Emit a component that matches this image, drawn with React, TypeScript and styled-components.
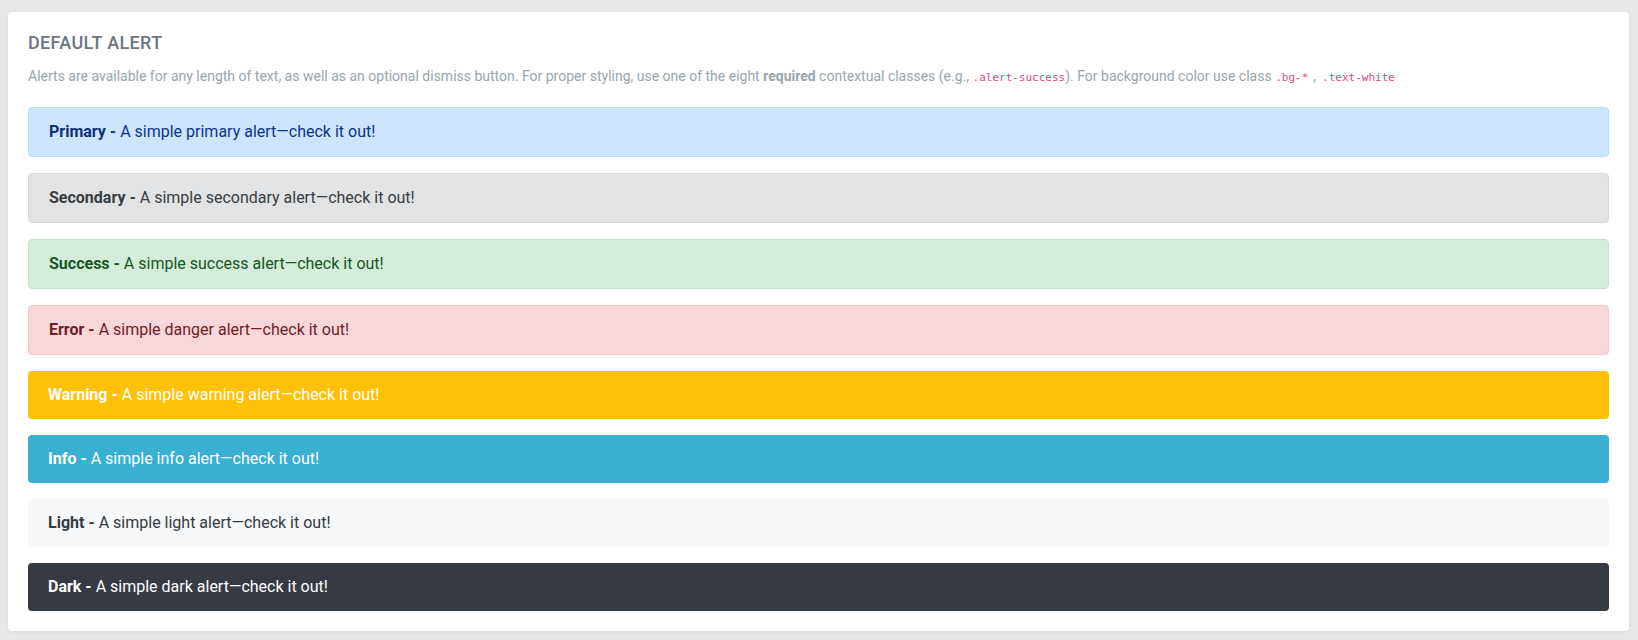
import React from "react";
import styled, { createGlobalStyle } from "styled-components";

const GlobalStyle = createGlobalStyle`
  html, body {
    margin: 0;
    padding: 0;
    background: #e8e8e8;
  }
  body {
    font-family: Roboto, "Noto Sans", sans-serif;
    -webkit-font-smoothing: antialiased;
  }
  * { box-sizing: border-box; }
`;

const Page = styled.div`
  padding: 12px 9px 9px 8px;
`;

const Card = styled.section`
  background: #ffffff;
  border-radius: 4px;
  box-shadow: 0 1px 4px rgba(0, 0, 0, 0.06);
  padding: 20px;
`;

const Title = styled.h4`
  margin: 0 0 12px;
  font-size: 18px;
  line-height: 21.6px;
  font-weight: 500;
  color: #6c757d;
  text-transform: uppercase;
  letter-spacing: 0.35px;
`;

const Description = styled.p`
  margin: 0 0 19px;
  font-size: 14px;
  line-height: 21px;
  color: #98a6ad;

  strong {
    font-weight: 700;
  }
`;

const Code = styled.code`
  font-family: "DejaVu Sans Mono", "Liberation Mono", monospace;
  font-size: 11px;
  color: #e83e8c;
`;

const Separator = styled.span`
  display: inline-block;
  margin: 0 6px 0 5px;
`;

type Variant = {
  bg: string;
  border: string;
  color: string;
  strong: string;
};

const Alert = styled.div<{ $v: Variant }>`
  background: ${(p) => p.$v.bg};
  border: ${(p) => (p.$v.border === "none" ? "none" : `1px solid ${p.$v.border}`)};
  color: ${(p) => p.$v.color};
  border-radius: 4px;
  padding: 12px 20px;
  font-size: 16px;
  line-height: 24px;
  margin-bottom: 16px;

  &:last-child {
    margin-bottom: 0;
  }

  strong {
    font-weight: 700;
    color: ${(p) => p.$v.strong};
  }
`;

const variants: Record<string, Variant> = {
  primary: { bg: "#cce5fc", border: "#b8d9fa", color: "#0c358a", strong: "#0c2f7a" },
  secondary: { bg: "#e2e3e5", border: "#d6d8db", color: "#383d41", strong: "#383d41" },
  success: { bg: "#d4ecda", border: "#c3e6cb", color: "#155724", strong: "#155724" },
  danger: { bg: "#f7d7da", border: "#f5c6cb", color: "#721c24", strong: "#721c24" },
  warning: { bg: "#ffc107", border: "none", color: "#ffffff", strong: "#ffffff" },
  info: { bg: "#39afd1", border: "none", color: "#ffffff", strong: "#ffffff" },
  light: { bg: "#f7f8fa", border: "none", color: "#343a40", strong: "#343a40" },
  dark: { bg: "#363a42", border: "none", color: "#ffffff", strong: "#ffffff" },
};

const alerts = [
  { key: "primary", label: "Primary", text: "A simple primary alert—check it out!" },
  { key: "secondary", label: "Secondary", text: "A simple secondary alert—check it out!" },
  { key: "success", label: "Success", text: "A simple success alert—check it out!" },
  { key: "danger", label: "Error", text: "A simple danger alert—check it out!" },
  { key: "warning", label: "Warning", text: "A simple warning alert—check it out!" },
  { key: "info", label: "Info", text: "A simple info alert—check it out!" },
  { key: "light", label: "Light", text: "A simple light alert—check it out!" },
  { key: "dark", label: "Dark", text: "A simple dark alert—check it out!" },
];

export default function App() {
  return (
    <>
      <GlobalStyle />
      <Page>
        <Card>
          <Title>Default Alert</Title>
          <Description>
            Alerts are available for any length of text, as well as an optional dismiss button. For proper
            styling, use one of the eight <strong>required</strong> contextual classes (e.g.,{" "}
            <Code>.alert-success</Code>). For background color use class <Code>.bg-*</Code>
            <Separator>,</Separator>
            <Code>.text-white</Code>
          </Description>
          {alerts.map((a) => (
            <Alert key={a.key} $v={variants[a.key]}>
              <strong>{a.label} - </strong>
              {a.text}
            </Alert>
          ))}
        </Card>
      </Page>
    </>
  );
}
